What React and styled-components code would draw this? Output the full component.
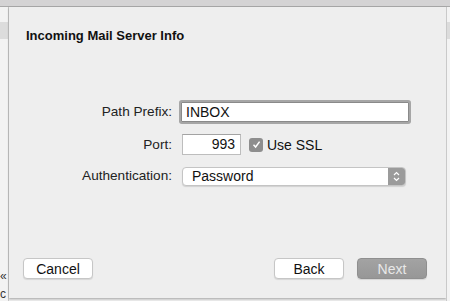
import styled, { createGlobalStyle } from "styled-components";

const Global = createGlobalStyle`
  html, body {
    margin: 0;
    padding: 0;
    width: 450px;
    height: 301px;
    overflow: hidden;
    background: #ececec;
    font-family: "Liberation Sans", Arial, sans-serif;
    font-size: 13px;
    color: #1a1a1a;
  }
`;

const Screen = styled.div`
  width: 450px;
  height: 301px;
  display: flex;
  flex-direction: column;
  overflow: hidden;
`;

const TitleBar = styled.div`
  height: 6px;
  flex: none;
  background: #d4d3d4;
  border-bottom: 1px solid #a9a9a9;
`;

const Body = styled.div`
  flex: 1;
  display: flex;
  min-height: 0;
`;

const Gutter = styled.div`
  width: ${(p) => p.$w}px;
  flex: none;
  display: flex;
  flex-direction: column;
  overflow: hidden;
  background: #f3f3f3;
  border-${(p) => (p.$side === "left" ? "right" : "left")}: 1px solid #c9c9c9;
  .band {
    margin-top: 15px;
    height: 17px;
    background: #dcdcdc;
  }
  .frag {
    margin-top: auto;
    margin-bottom: 0;
    display: flex;
    flex-direction: column;
    gap: 4px;
    font-size: 12px;
    line-height: 14px;
    color: #333;
    white-space: nowrap;
  }
`;

const Sheet = styled.div`
  flex: 1;
  height: 291px;
  background: #eeeeee;
  box-shadow: 0 1px 2px rgba(0, 0, 0, 0.3);
  display: flex;
  flex-direction: column;
  padding: 21px 0 0 17px;
  box-sizing: border-box;
`;

const Heading = styled.div`
  font-weight: bold;
  font-size: 13px;
  line-height: 16px;
  color: #111;
`;

const Form = styled.div`
  margin-top: 51px;
  display: grid;
  grid-template-columns: 146px auto;
  column-gap: 10px;
  align-items: center;
`;

const Label = styled.div`
  text-align: right;
  height: ${(p) => p.$h}px;
  line-height: ${(p) => p.$h}px;
  font-size: 13.6px;
  color: #222;
`;

const Field = styled.div`
  height: 21px;
  width: ${(p) => p.$w}px;
  box-sizing: border-box;
  background: #fff;
  border: 1px solid #bdbdbd;
  border-top-color: #a3a3a3;
  padding: 0 5px;
  line-height: 19px;
  text-align: ${(p) => p.$align || "left"};
  color: #111;
  font-size: 14px;
`;

const Focused = styled(Field)`
  height: 20px;
  line-height: 18px;
  margin-left: -1px;
  border: 1px solid #8a8a8a;
  box-shadow: 0 0 0 2px #a6a6a6;
  border-radius: 1px;
  padding-left: 4px;
`;

const Row = styled.div`
  display: flex;
  align-items: center;
  height: ${(p) => p.$h}px;
`;

const Check = styled.span`
  width: 14px;
  height: 14px;
  margin-left: 8px;
  border-radius: 3px;
  background: #8e8e8e;
  display: flex;
  align-items: center;
  justify-content: center;
`;

const CheckLabel = styled.span`
  margin-left: 4px;
  font-size: 14px;
  color: #111;
`;

const Popup = styled.div`
  width: 224px;
  height: 19px;
  box-sizing: border-box;
  display: flex;
  background: #fff;
  border: 1px solid #c4c4c4;
  border-radius: 4px;
  box-shadow: 0 1px 1px rgba(0, 0, 0, 0.12);
  overflow: hidden;
  .value {
    flex: 1;
    padding-left: 9px;
    line-height: 17px;
    font-size: 14px;
    color: #111;
  }
  .arrows {
    width: 17px;
    background: #9b9b9b;
    display: flex;
    align-items: center;
    justify-content: center;
  }
`;

const Footer = styled.div`
  margin-top: auto;
  margin-bottom: 19px;
  margin-right: 19px;
  display: flex;
  align-items: center;
`;

const Button = styled.div`
  width: 70px;
  height: 21px;
  box-sizing: border-box;
  border-radius: 4px;
  text-align: center;
  line-height: 20px;
  font-size: 14px;
  margin-left: ${(p) => p.$ml || 0}px;
  background: ${(p) => (p.$disabled ? "linear-gradient(#a3a3a3, #979797)" : "#fff")};
  color: ${(p) => (p.$disabled ? "#e8e8e8" : "#111")};
  border: 1px solid ${(p) => (p.$disabled ? "#8f8f8f" : "#c6c6c6")};
  box-shadow: 0 1px 1px rgba(0, 0, 0, 0.1);
  &.first {
    margin-left: -3px;
  }
  &.push {
    margin-left: auto;
  }
`;

export default function App() {
  return (
    <Screen>
      <Global />
      <TitleBar />
      <Body>
        <Gutter $w={8} $side="left">
          <div className="band" />
          <div className="frag">
            <span>«</span>
            <span>c</span>
          </div>
        </Gutter>
        <Sheet>
          <Heading>Incoming Mail Server Info</Heading>
          <Form>
            <Label $h={34}>Path Prefix:</Label>
            <Row $h={34}>
              <Focused $w={228}>INBOX</Focused>
            </Row>
            <Label $h={31}>Port:</Label>
            <Row $h={31}>
              <Field $w={59} $align="right">993</Field>
              <Check>
                <svg width="9" height="9" viewBox="0 0 9 9">
                  <path d="M1.5 4.8 L3.6 7 L7.6 1.6" fill="none" stroke="#fff" strokeWidth="1.5" />
                </svg>
              </Check>
              <CheckLabel>Use SSL</CheckLabel>
            </Row>
            <Label $h={32}>Authentication:</Label>
            <Row $h={32}>
              <Popup>
                <span className="value">Password</span>
                <span className="arrows">
                  <svg width="7" height="11" viewBox="0 0 7 11">
                    <path d="M1 4 L3.5 1.5 L6 4 M1 7 L3.5 9.5 L6 7" fill="none" stroke="#fff" strokeWidth="1.2" />
                  </svg>
                </span>
              </Popup>
            </Row>
          </Form>
          <Footer>
            <Button className="first">Cancel</Button>
            <Button className="push">Back</Button>
            <Button $ml={13} $disabled>Next</Button>
          </Footer>
        </Sheet>
        <Gutter $w={3} $side="right">
          <div className="band" />
        </Gutter>
      </Body>
    </Screen>
  );
}
